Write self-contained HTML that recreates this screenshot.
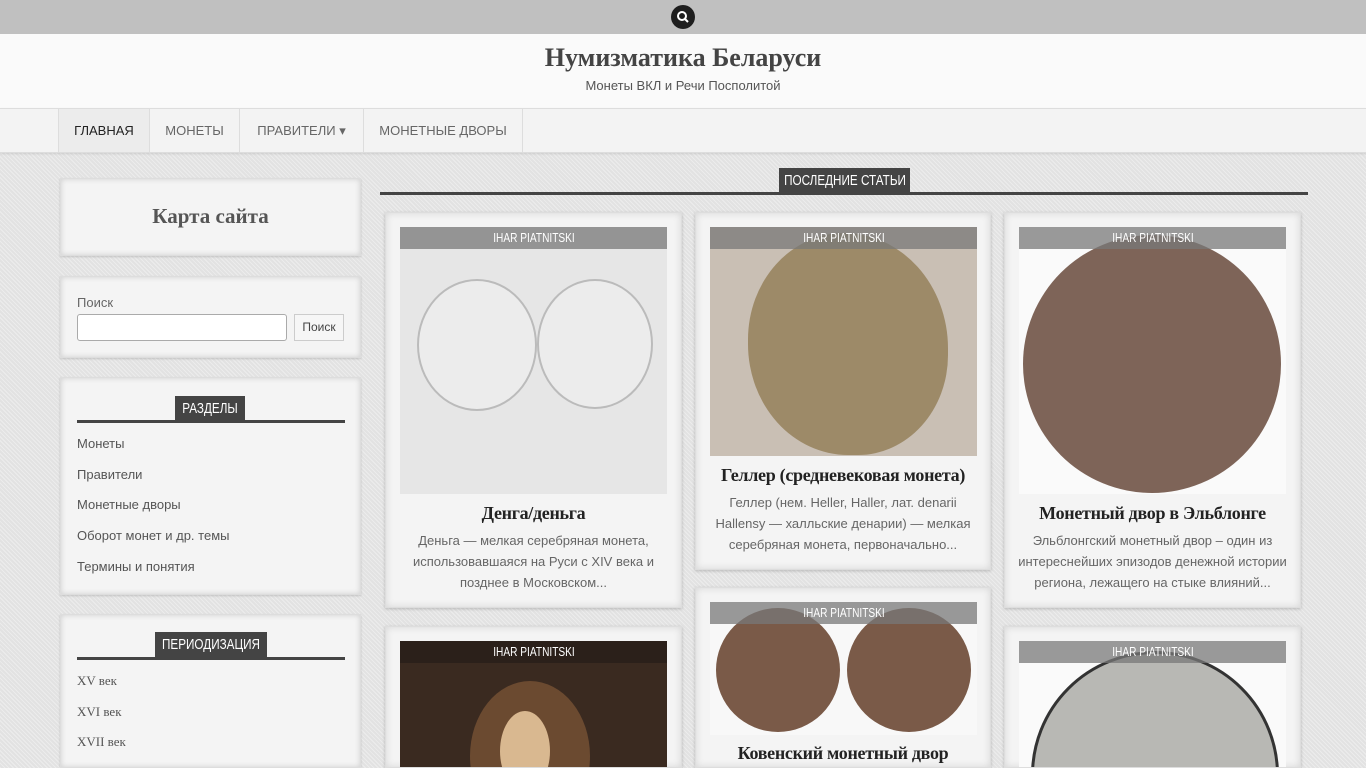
<!DOCTYPE html>
<html><head><meta charset="utf-8"><style>
*{box-sizing:border-box;margin:0;padding:0}
html,body{width:1366px;height:768px;overflow:hidden}
body{background:#e2e2e2;font-family:"Liberation Sans",sans-serif;position:relative;
background-image:repeating-linear-gradient(45deg,rgba(255,255,255,.35) 0 1px,transparent 1px 3px);}
.abs{position:absolute}
.top{left:0;top:0;width:1366px;height:34px;background:#c0c0c0}
.srch{left:671px;top:5px;width:24px;height:24px;border-radius:50%;background:#1e1e1e}
.hdr{left:0;top:34px;width:1366px;height:74px;background:#fafafa;text-align:center}
.hdr h1{font-family:"Liberation Serif",serif;font-size:26px;font-weight:bold;color:#444;margin-top:9px}
.hdr p{font-size:13px;color:#555;margin-top:5px}
.nav{left:0;top:108px;width:1366px;height:45px;background:#f3f3f3;border-top:1px solid #ddd;border-bottom:1px solid #ddd;box-shadow:0 1px 2px rgba(0,0,0,.1)}
.nav div{position:absolute;top:0;height:43px;line-height:43px;font-size:13px;color:#666;text-align:center;border-right:1px solid #ddd;white-space:nowrap}
.w{position:absolute;left:60px;width:301px;background:#f4f4f4;border:1px solid #ddd;box-shadow:0 0 6px rgba(0,0,0,.15) inset,0 1px 2px rgba(0,0,0,.15);overflow:hidden}
.bar{position:absolute;height:3px;background:#444}
.lbl{position:absolute;background:#444;color:#fff;font-size:15px;white-space:nowrap}
.lbl span,.au span{position:absolute;left:50%;top:0;transform:translateX(-50%) scaleX(.78);white-space:nowrap}
.w a{display:block;font-size:13px;color:#555;position:absolute;left:16px}
.card{position:absolute;background:#f4f4f4;border:1px solid #ddd;box-shadow:0 0 8px rgba(0,0,0,.12) inset,0 1px 3px rgba(0,0,0,.2);overflow:hidden}
.img{position:absolute;overflow:hidden}
.au{position:absolute;left:0;top:0;right:0;height:22px;background:rgba(120,120,120,.75);color:#fff;font-size:13px;line-height:22px}
.t{position:absolute;left:0;right:0;text-align:center;font-family:"Liberation Serif",serif;font-weight:bold;font-size:18px;color:#222;white-space:nowrap;letter-spacing:-0.3px}
.e{position:absolute;left:12px;right:12px;text-align:center;font-size:13px;line-height:21px;color:#666}
.coin{position:absolute;border-radius:50%}
</style></head><body>
<div class="abs top"></div>
<div class="abs srch"><svg width="24" height="24"><circle cx="11" cy="11" r="4" fill="none" stroke="#fff" stroke-width="2"/><line x1="14" y1="14" x2="17" y2="17" stroke="#fff" stroke-width="2"/></svg></div>
<div class="abs hdr"><h1>Нумизматика Беларуси</h1><p>Монеты ВКЛ и Речи Посполитой</p></div>
<div class="abs nav">
<div style="left:58px;width:92px;color:#222;border-left:1px solid #ddd;background:#ececec">ГЛАВНАЯ</div>
<div style="left:150px;width:90px">МОНЕТЫ</div>
<div style="left:240px;width:124px">ПРАВИТЕЛИ ▾</div>
<div style="left:364px;width:159px">МОНЕТНЫЕ ДВОРЫ</div>
</div>

<div class="w" style="top:178px;height:78px"><div style="text-align:center;font-family:'Liberation Serif',serif;font-weight:bold;font-size:21px;color:#555;margin-top:25px">Карта сайта</div></div>
<div class="w" style="top:276px;height:82px">
<div style="position:absolute;left:16px;top:18px;font-size:13px;color:#666">Поиск</div>
<div style="position:absolute;left:16px;top:37px;width:210px;height:27px;background:#fff;border:1px solid #aaa;border-radius:3px"></div>
<div style="position:absolute;left:233px;top:37px;width:50px;height:27px;background:#f6f6f6;border:1px solid #ccc;font-size:12px;line-height:25px;text-align:center;color:#444">Поиск</div>
</div>
<div class="w" style="top:377px;height:218px">
<div class="bar" style="left:16px;width:268px;top:42px"></div>
<div class="lbl" style="left:114px;width:70px;top:18px;height:26px;line-height:26px"><span>РАЗДЕЛЫ</span></div>
<a style="top:58px">Монеты</a><a style="top:89px">Правители</a><a style="top:119px">Монетные дворы</a><a style="top:150px">Оборот монет и др. темы</a><a style="top:181px">Термины и понятия</a>
</div>
<div class="w" style="top:614px;height:154px">
<div class="bar" style="left:16px;width:268px;top:42px"></div>
<div class="lbl" style="left:94px;width:112px;top:17px;height:26px;line-height:26px"><span>ПЕРИОДИЗАЦИЯ</span></div>
<a style="top:58px;font-family:'Liberation Serif',serif">XV век</a><a style="top:89px;font-family:'Liberation Serif',serif">XVI век</a><a style="top:119px;font-family:'Liberation Serif',serif">XVII век</a>
</div>

<div class="bar" style="left:380px;width:928px;top:192px"></div>
<div class="lbl" style="left:779px;width:131px;top:168px;height:26px;line-height:26px"><span>ПОСЛЕДНИЕ СТАТЬИ</span></div>

<div class="card" style="left:385px;top:212px;width:297px;height:396px">
<div class="img" style="left:14px;top:14px;width:267px;height:267px;background:#e6e6e6">
<div class="coin" style="left:17px;top:52px;width:120px;height:132px;border:2px solid #bbb;background:#ececec"></div>
<div class="coin" style="left:137px;top:52px;width:116px;height:130px;border:2px solid #bbb;background:#ececec"></div>
<div class="au"><span>IHAR PIATNITSKI</span></div></div>
<div class="t" style="top:290px">Денга/деньга</div>
<div class="e" style="top:317px">Деньга — мелкая серебряная монета, использовавшаяся на Руси с XIV века и позднее в Московском...</div>
</div>
<div class="card" style="left:385px;top:626px;width:297px;height:142px">
<div class="img" style="left:14px;top:14px;width:267px;height:140px;background:#3a2a20">
<div class="coin" style="left:70px;top:40px;width:120px;height:150px;background:#6b4a30"></div>
<div class="coin" style="left:100px;top:70px;width:50px;height:80px;background:#d9b890"></div>
<div class="au" style="background:rgba(40,30,25,.8)"><span>IHAR PIATNITSKI</span></div></div>
</div>

<div class="card" style="left:695px;top:212px;width:296px;height:358px">
<div class="img" style="left:14px;top:14px;width:267px;height:229px;background:#c9bfb4">
<div class="coin" style="left:38px;top:6px;width:200px;height:222px;background:#9d8a68;border-radius:48% 52% 45% 50%"></div>
<div class="au"><span>IHAR PIATNITSKI</span></div></div>
<div class="t" style="top:252px">Геллер (средневековая монета)</div>
<div class="e" style="top:279px">Геллер (нем. Heller, Haller, лат. denarii Hallensy — халльские денарии) — мелкая серебряная монета, первоначально...</div>
</div>
<div class="card" style="left:695px;top:587px;width:296px;height:181px">
<div class="img" style="left:14px;top:14px;width:267px;height:133px;background:#f8f8f8">
<div class="coin" style="left:6px;top:6px;width:124px;height:124px;background:#7a5a48"></div>
<div class="coin" style="left:137px;top:6px;width:124px;height:124px;background:#7a5a48"></div>
<div class="au"><span>IHAR PIATNITSKI</span></div></div>
<div class="t" style="top:155px">Ковенский монетный двор</div>
</div>

<div class="card" style="left:1004px;top:212px;width:297px;height:396px">
<div class="img" style="left:14px;top:14px;width:267px;height:267px;background:#fafafa">
<div class="coin" style="left:4px;top:8px;width:258px;height:258px;background:#7e6458"></div>
<div class="au"><span>IHAR PIATNITSKI</span></div></div>
<div class="t" style="top:290px">Монетный двор в Эльблонге</div>
<div class="e" style="top:317px">Эльблонгский монетный двор – один из интереснейших эпизодов денежной истории региона, лежащего на стыке влияний...</div>
</div>
<div class="card" style="left:1004px;top:626px;width:297px;height:142px">
<div class="img" style="left:14px;top:14px;width:267px;height:140px;background:#fafafa">
<div class="coin" style="left:12px;top:10px;width:248px;height:248px;background:#b8b8b4;border:3px solid #333"></div>
<div class="au"><span>IHAR PIATNITSKI</span></div></div>
</div>
</body></html>
